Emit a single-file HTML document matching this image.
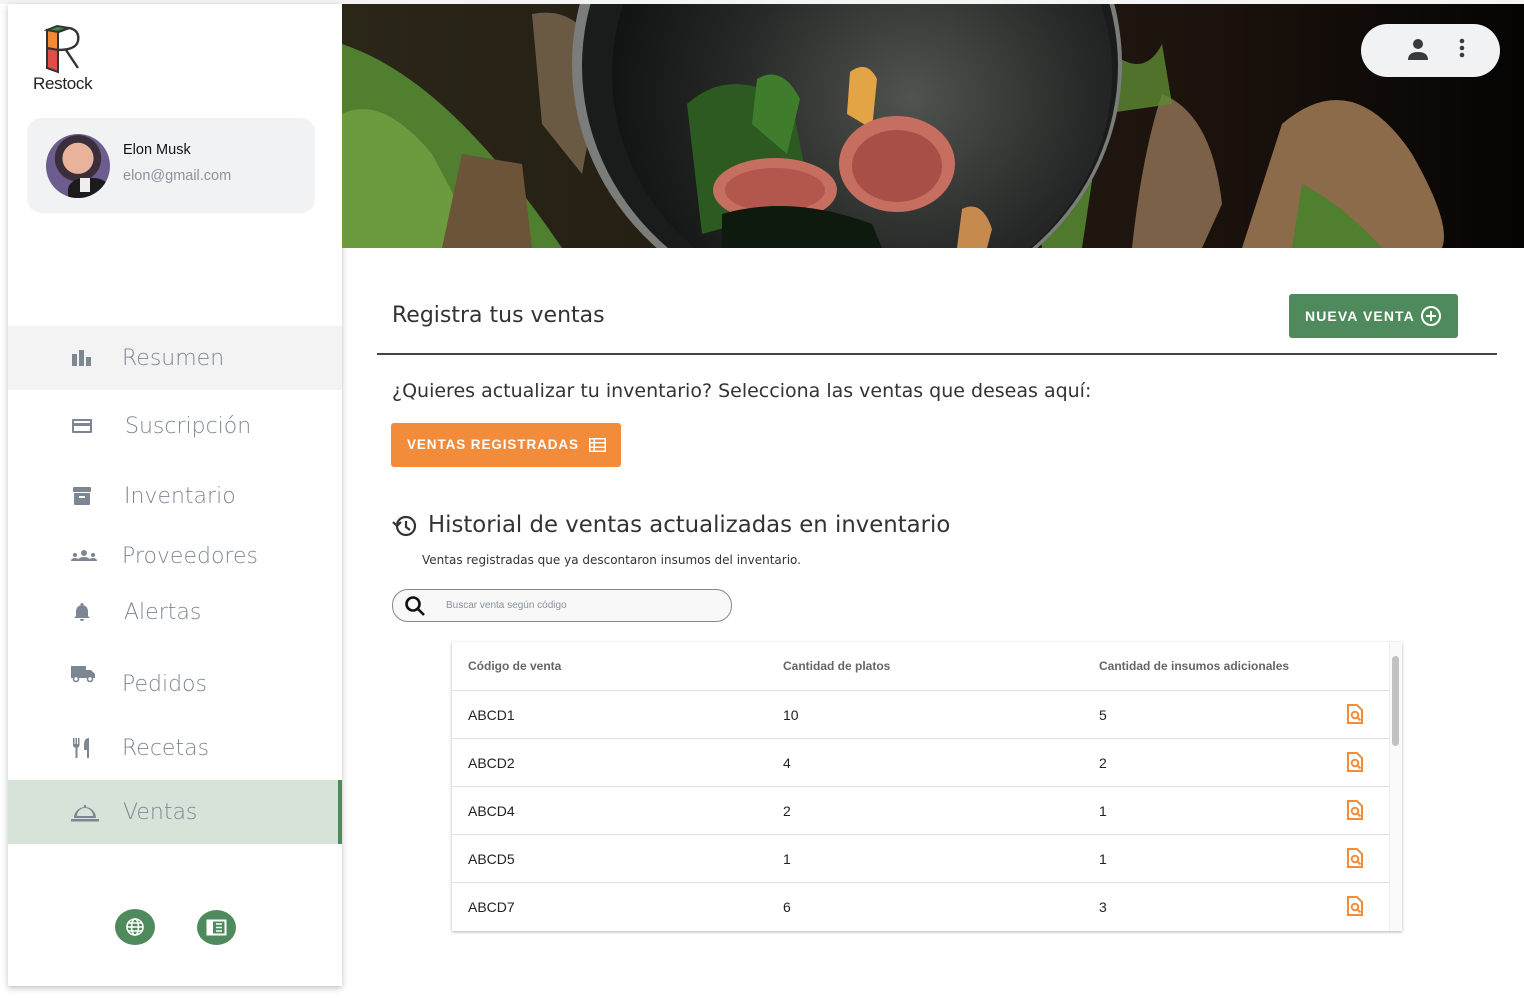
<!DOCTYPE html>
<html><head><meta charset="utf-8"><style>
*{margin:0;padding:0;box-sizing:border-box}
body{width:1524px;height:998px;background:#fff;position:relative;overflow:hidden;font-family:"DejaVu Sans","Liberation Sans",sans-serif}
.abs{position:absolute}
#side{left:8px;top:4px;width:334px;height:982px;background:#fff;box-shadow:0 2px 6px rgba(0,0,0,.25)}
.nav{position:absolute;left:0;width:334px;height:64px;display:flex;align-items:center;color:#7d8794;font-size:22px;font-weight:300}
.nav svg{position:absolute;left:62px}
.nav span{position:absolute;left:114px}
.th{font-family:"Liberation Sans",sans-serif;font-weight:bold;font-size:12px;color:#666}
.row{position:absolute;left:0;width:937px;height:48px;border-top:1px solid #e0e0e0;font-family:"Liberation Sans",sans-serif;font-size:14px;color:#222}
.row span{position:absolute;top:16px}
.row svg{position:absolute;left:895px;top:13px}
</style></head><body>
<div class="abs" style="left:0;top:0;width:1524px;height:4px;background:#f4f4f4"></div>
<div id="side" class="abs">
 <svg class="abs" style="left:36px;top:20px" width="40" height="50" viewBox="0 0 40 50">
  <path d="M3 6 L13 2 L25 4 L14 8Z" fill="#3f8a4e" stroke="#333" stroke-width="2"/>
  <path d="M3 6 L14 8 L14 26 L3 24Z" fill="#f08a33" stroke="#333" stroke-width="2"/>
  <path d="M3 24 L14 26 L14 48 L3 44Z" fill="#e04e45" stroke="#333" stroke-width="2"/>
  <path d="M14 8 L25 4 Q36 6 34 17 Q32 26 14 26 M22 26 L34 44" fill="none" stroke="#333" stroke-width="2.4"/>
 </svg>
 <div class="abs" style="left:25px;top:70px;font-size:17px;color:#222;letter-spacing:-0.3px;font-family:'Liberation Sans',sans-serif">Restock</div>
 <div class="abs" style="left:19px;top:114px;width:288px;height:95px;background:#f1f2f4;border-radius:14px"></div>
 <div class="abs" style="left:38px;top:130px;width:64px;height:64px;border-radius:50%;background:radial-gradient(circle at 50% 38%,#e9b39b 0 30%,#3a2e3a 31% 45%,#6d5d8e 46%);overflow:hidden">
  <div class="abs" style="left:22px;top:44px;width:42px;height:30px;background:#1b1b1b;border-radius:40% 40% 0 0"></div>
  <div class="abs" style="left:34px;top:44px;width:10px;height:14px;background:#eee"></div></div>
 <div class="abs" style="left:115px;top:138px;font-size:14.5px;color:#111;font-family:'Liberation Sans',sans-serif">Elon Musk</div>
 <div class="abs" style="left:115px;top:164px;font-size:14.5px;color:#8a939e;font-family:'Liberation Sans',sans-serif">elon@gmail.com</div>

 <div class="nav" style="top:322px;background:#f3f3f3"><svg width="24" height="24" viewBox="0 0 24 24" fill="#7d8794"><rect x="2" y="8" width="5" height="12"/><rect x="9" y="4" width="5" height="16"/><rect x="16" y="11" width="5" height="9"/></svg><span>Resumen</span></div>
 <div class="nav" style="top:390px"><svg width="24" height="24" viewBox="0 0 24 24" fill="#7d8794"><path d="M3 5h18a1 1 0 011 1v12a1 1 0 01-1 1H3a1 1 0 01-1-1V6a1 1 0 011-1zm1 2v2h16V7zm0 5v5h16v-5z"/></svg><span style="left:117px">Suscripción</span></div>
 <div class="nav" style="top:460px"><svg width="24" height="24" viewBox="0 0 24 24" fill="#7d8794"><rect x="3" y="3" width="18" height="5" rx="1"/><path d="M4 9h16v11a1 1 0 01-1 1H5a1 1 0 01-1-1zm5 3v2h6v-2z"/></svg><span style="left:116px">Inventario</span></div>
 <div class="nav" style="top:520px"><svg width="28" height="24" viewBox="0 0 28 24" fill="#7d8794"><circle cx="14" cy="9" r="3"/><path d="M8 17q0-4 6-4t6 4z"/><circle cx="5" cy="11" r="2"/><circle cx="23" cy="11" r="2"/><path d="M1 17q0-3 4-3t4 3zM19 17q0-3 4-3t4 3z"/></svg><span>Proveedores</span></div>
 <div class="nav" style="top:576px"><svg width="24" height="24" viewBox="0 0 24 24" fill="#7d8794"><path d="M12 3a1.5 1.5 0 011.5 1.5v.7A6 6 0 0118 11v5l2 2H4l2-2v-5a6 6 0 014.5-5.8v-.7A1.5 1.5 0 0112 3zM10 19h4a2 2 0 01-4 0z"/></svg><span style="left:116px">Alertas</span></div>
 <div class="nav" style="top:648px"><svg width="26" height="24" viewBox="0 0 26 24" fill="#7d8794" style="top:10px"><path d="M1 4h15v12H1zM16 8h5l4 4v4h-9z"/><circle cx="6" cy="17" r="2.5" fill="#fff" stroke="#7d8794" stroke-width="1.6"/><circle cx="20" cy="17" r="2.5" fill="#fff" stroke="#7d8794" stroke-width="1.6"/></svg><span>Pedidos</span></div>
 <div class="nav" style="top:712px"><svg width="24" height="24" viewBox="0 0 24 24" fill="#7d8794"><path d="M3 2h1.5v6h1V2H7v6h1V2h1.5v7a3 3 0 01-2 2.8V22h-2V11.8A3 3 0 013 9zM14 9q0-7 5-7v20h-2v-8h-3z"/></svg><span>Recetas</span></div>
 <div class="nav" style="top:776px;background:#d5e3d8;border-right:4px solid #4e8a5c"><svg width="30" height="24" viewBox="0 0 30 24" fill="#7d8794"><path d="M14 5h2v2h-2z"/><path d="M4 18a11 11 0 0122 0zm3-2h16a8 8 0 00-16 0z" fill-rule="evenodd"/><rect x="1" y="19" width="28" height="2.5"/></svg><span style="left:115px">Ventas</span></div>

 <div class="abs" style="left:107px;top:905px;width:40px;height:36px;border-radius:50%;background:#4e8a5c"></div>
 <svg class="abs" style="left:117px;top:913px" width="20" height="20" viewBox="0 0 20 20" fill="none" stroke="#fff" stroke-width="1.6"><circle cx="10" cy="10" r="8"/><ellipse cx="10" cy="10" rx="3.5" ry="8"/><path d="M2 10h16M3.5 6h13M3.5 14h13"/></svg>
 <div class="abs" style="left:189px;top:906px;width:39px;height:35px;border-radius:50%;background:#4e8a5c"></div>
 <svg class="abs" style="left:198px;top:915px" width="21" height="17" viewBox="0 0 21 17"><rect x="0.5" y="0.5" width="20" height="16" fill="#fff"/><rect x="7" y="2.5" width="11.5" height="12" fill="#4e8a5c"/><path d="M10 5h6M10 8.5h6M10 12h6" stroke="#fff" stroke-width="1.4"/></svg>
</div>

<svg class="abs" style="left:342px;top:4px" width="1182" height="244" viewBox="0 0 1182 244">
 <defs><radialGradient id="pl" cx="0.6" cy="0.55" r="0.6"><stop offset="0" stop-color="#50534f"/><stop offset="0.6" stop-color="#262827"/><stop offset="1" stop-color="#121413"/></radialGradient>
 <linearGradient id="bg" x1="0" x2="1"><stop offset="0" stop-color="#2a2618"/><stop offset="0.7" stop-color="#1e140e"/><stop offset="1" stop-color="#050403"/></linearGradient></defs>
 <rect width="1182" height="244" fill="url(#bg)"/>
 <path d="M0 40 Q60 60 120 120 Q170 170 220 244 L0 244Z" fill="#4f7f2f"/>
 <path d="M0 110 Q40 90 90 150 L140 244 L0 244Z" fill="#6c9a3e"/>
 <path d="M120 150 L180 160 L190 244 L100 244Z" fill="#6b5438"/>
 <path d="M190 10 Q240 0 260 60 L240 170 L200 120Z" fill="#6a5a44"/>
 <path d="M660 0 Q720 40 760 110 L740 244 L700 244 L680 120Z" fill="#4f7a2e"/>
 <path d="M820 90 Q870 110 880 200 L860 244 L790 244 Q800 150 820 90Z" fill="#7b6148"/>
 <path d="M940 120 Q1010 60 1070 150 Q1110 220 1100 244 L900 244Z" fill="#8b6b4a"/>
 <path d="M960 180 Q1000 200 1040 244 L950 244Z" fill="#4f7f2f"/>
 <path d="M760 40 Q800 80 820 40 L830 100 L760 110Z" fill="#5c8a33" opacity=".8"/>
 <ellipse cx="505" cy="60" rx="275" ry="255" fill="#7a7d7a"/>
 <ellipse cx="508" cy="62" rx="268" ry="248" fill="#1a1c1b"/>
 <ellipse cx="520" cy="70" rx="250" ry="235" fill="url(#pl)"/>
 <path d="M345 100 Q390 60 450 100 L470 200 L360 230Z" fill="#2c5a20"/>
 <path d="M415 75 Q440 60 458 95 L445 150 L410 120Z" fill="#3f7d2c"/>
 <path d="M508 68 Q525 55 535 75 L530 125 L505 110Z" fill="#e2a445"/>
 <ellipse cx="433" cy="186" rx="62" ry="32" fill="#c66e60"/>
 <ellipse cx="433" cy="186" rx="50" ry="22" fill="#b3564e"/>
 <ellipse cx="555" cy="160" rx="58" ry="48" fill="#c66e60"/>
 <ellipse cx="555" cy="162" rx="45" ry="36" fill="#a94f48"/>
 <path d="M380 210 Q450 190 530 220 L540 244 L380 244Z" fill="#0d1a0d"/>
 <path d="M620 205 Q640 195 650 225 L645 244 L615 244Z" fill="#c78a4e"/>
 <rect x="1019" y="20" width="139" height="53" rx="26.5" fill="#f1f2f4"/>
 <circle cx="1076" cy="40" r="5" fill="#3a3a3a"/><path d="M1066 56q0-8 10-8t10 8z" fill="#3a3a3a"/>
 <circle cx="1120" cy="37" r="2.3" fill="#3a3a3a"/><circle cx="1120" cy="44" r="2.3" fill="#3a3a3a"/><circle cx="1120" cy="51" r="2.3" fill="#3a3a3a"/>
</svg>

<div class="abs" style="left:392px;top:303px;font-size:22px;color:#333">Registra tus ventas</div>
<div class="abs" style="left:1289px;top:294px;width:169px;height:44px;background:#4e8a5c;border-radius:3px;color:#fff;font-family:'Liberation Sans',sans-serif;font-size:14px;font-weight:bold;letter-spacing:1.1px;line-height:44px;padding-left:16px">NUEVA VENTA
 <svg class="abs" style="left:131px;top:11px" width="22" height="22" viewBox="0 0 22 22" fill="none" stroke="#fff" stroke-width="2"><circle cx="11" cy="11" r="9"/><path d="M11 6v10M6 11h10"/></svg></div>
<div class="abs" style="left:377px;top:353px;width:1120px;height:1.5px;background:#444"></div>
<div class="abs" style="left:392px;top:380px;font-size:19px;color:#333">¿Quieres actualizar tu inventario? Selecciona las ventas que deseas aquí:</div>
<div class="abs" style="left:391px;top:423px;width:230px;height:44px;background:#f28c3a;border-radius:3px;color:#fff;font-family:'Liberation Sans',sans-serif;font-size:13.5px;font-weight:bold;letter-spacing:0.9px;line-height:44px;padding-left:16px">VENTAS REGISTRADAS
 <svg class="abs" style="left:198px;top:15px" width="17" height="14" viewBox="0 0 17 14" fill="#fff"><path d="M0 0h17v14H0zM1.5 1.5v2.5h3V1.5zm4.5 0v2.5h9.5V1.5zM1.5 5.5v3h3v-3zm4.5 0v3h9.5v-3zM1.5 10v2.5h3V10zm4.5 0v2.5h9.5V10z" fill-rule="evenodd"/></svg></div>
<svg class="abs" style="left:391px;top:513px" width="28" height="26" viewBox="0 0 28 26" fill="none" stroke="#333" stroke-width="2.2"><path d="M6 13a9 9 0 109-9A9 9 0 006 11"/><path d="M2 9l4 4 4-4"/><path d="M15 8v6l4 3"/></svg>
<div class="abs" style="left:428px;top:512px;font-size:22.8px;color:#333">Historial de ventas actualizadas en inventario</div>
<div class="abs" style="left:422px;top:553px;font-size:12px;color:#333">Ventas registradas que ya descontaron insumos del inventario.</div>
<div class="abs" style="left:392px;top:589px;width:340px;height:33px;border:1px solid #888;border-radius:16px;background:#f8f8f8"></div>
<svg class="abs" style="left:403px;top:594px" width="24" height="24" viewBox="0 0 24 24" fill="none" stroke="#111" stroke-width="2.6"><circle cx="10" cy="10" r="6.5"/><path d="M15 15l6 6"/></svg>
<div class="abs" style="left:446px;top:600px;font-size:10px;color:#8a929a;font-family:'Liberation Sans',sans-serif">Buscar venta según código</div>

<div class="abs" style="left:452px;top:642px;width:950px;height:289px;background:#fff;box-shadow:0 1px 3px rgba(0,0,0,.3);overflow:hidden">
 <div class="th abs" style="left:16px;top:17px">Código de venta</div>
 <div class="th abs" style="left:331px;top:17px">Cantidad de platos</div>
 <div class="th abs" style="left:647px;top:17px">Cantidad de insumos adicionales</div>
 <div class="abs" style="left:937px;top:0;width:13px;height:289px;background:#fafafa;border-left:1px solid #eee"></div>
 <div class="abs" style="left:940px;top:14px;width:7px;height:90px;background:#c2c2c2;border-radius:4px"></div>
 <div class="row" style="top:48px"><span style="left:16px">ABCD1</span><span style="left:331px">10</span><span style="left:647px">5</span><svg width="16" height="20" viewBox="0 0 16 20" fill="none" stroke="#f28c3a" stroke-width="2"><path d="M1 1h9l5 5v13H1z"/><circle cx="8" cy="11" r="3.3"/><path d="M10.5 13.5l3 3"/></svg></div>
 <div class="row" style="top:96px"><span style="left:16px">ABCD2</span><span style="left:331px">4</span><span style="left:647px">2</span><svg width="16" height="20" viewBox="0 0 16 20" fill="none" stroke="#f28c3a" stroke-width="2"><path d="M1 1h9l5 5v13H1z"/><circle cx="8" cy="11" r="3.3"/><path d="M10.5 13.5l3 3"/></svg></div>
 <div class="row" style="top:144px"><span style="left:16px">ABCD4</span><span style="left:331px">2</span><span style="left:647px">1</span><svg width="16" height="20" viewBox="0 0 16 20" fill="none" stroke="#f28c3a" stroke-width="2"><path d="M1 1h9l5 5v13H1z"/><circle cx="8" cy="11" r="3.3"/><path d="M10.5 13.5l3 3"/></svg></div>
 <div class="row" style="top:192px"><span style="left:16px">ABCD5</span><span style="left:331px">1</span><span style="left:647px">1</span><svg width="16" height="20" viewBox="0 0 16 20" fill="none" stroke="#f28c3a" stroke-width="2"><path d="M1 1h9l5 5v13H1z"/><circle cx="8" cy="11" r="3.3"/><path d="M10.5 13.5l3 3"/></svg></div>
 <div class="row" style="top:240px"><span style="left:16px">ABCD7</span><span style="left:331px">6</span><span style="left:647px">3</span><svg width="16" height="20" viewBox="0 0 16 20" fill="none" stroke="#f28c3a" stroke-width="2"><path d="M1 1h9l5 5v13H1z"/><circle cx="8" cy="11" r="3.3"/><path d="M10.5 13.5l3 3"/></svg></div>
</div>
</body></html>
